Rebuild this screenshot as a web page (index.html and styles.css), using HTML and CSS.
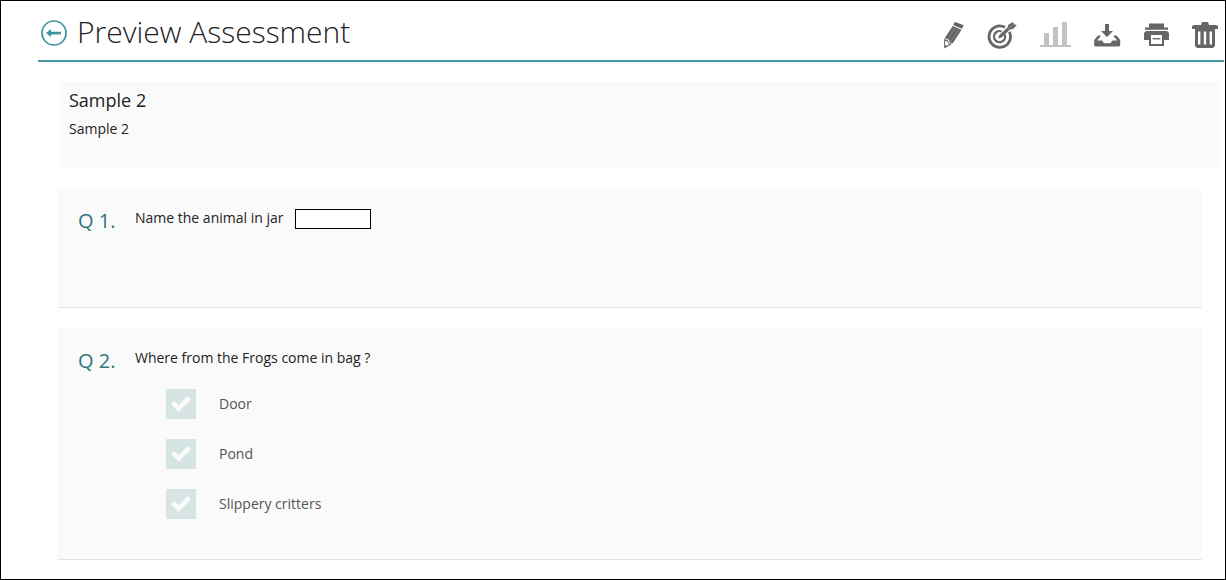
FILE: index.html
```html
<!DOCTYPE html>
<html lang="en">
<head>
    <meta charset="UTF-8">
    <meta name="viewport" content="width=device-width, initial-scale=1.0">
    <title>Preview Assessment</title>
    <link rel="stylesheet" href="styles.css">
</head>
<body>
    <header class="page-header">
        <a href="#" class="back" aria-label="Back">
            <svg width="26" height="26" viewBox="0 0 26 26">
                <circle cx="13" cy="13" r="12" fill="none" stroke="currentColor" stroke-width="1.7"/>
                <path d="M5 13l5-4v2.8h10v2.6H10V17z" fill="currentColor"/>
            </svg>
        </a>
        <h1>Preview Assessment</h1>
        <div class="toolbar">
            <button type="button" aria-label="Edit">
                <svg width="21" height="28" viewBox="0 0 21 28">
                    <path d="M12.3 1L20.7 4.2L19 7.8L10.3 4.2L11.3 1.4z"/>
                    <path d="M9.7 5L18.6 8.8L9.6 22.4L6.8 21.4L5.8 18.8L1.6 17.2z"/>
                    <path d="M1.1 17.8L5 19.4L6.2 22L9 23L1.2 27.4z"/>
                    <path d="M2.2 20L4.4 20.6L5.4 22.6L6.6 23L3.8 24.8L2.2 24z" fill="#fff"/>
                    <path d="M12.4 6.6L4.6 18M15.8 8L7.8 20.4" stroke="#8a8a8a" stroke-width="0.8"/>
                </svg>
            </button>
            <button type="button" aria-label="Set target">
                <svg width="30" height="28" viewBox="0 0 30 28">
                    <path d="M18 6.3A10.7 10.7 0 1 0 22.3 10.8" fill="none" stroke="currentColor" stroke-width="2.8"/>
                    <path d="M14.6 10.4A5.6 5.6 0 1 0 17.7 13.4" fill="none" stroke="currentColor" stroke-width="2.2"/>
                    <path d="M11 17.6L12.4 14L20.4 6.6L21.6 3.4L26 1L27 3.2L29.8 4L26.4 7.8L23 8.4L14.6 16.4z"/>
                    <path d="M20.8 8.2L27.4 2.6" stroke="#aaa" stroke-width="0.6"/>
                </svg>
            </button>
            <button type="button" class="muted" aria-label="Results">
                <svg width="31" height="28" viewBox="0 0 31 28">
                    <path d="M0 24h31v2H0zM4 12h5v12H4zM13 6h5v18h-5zM22 1h5v23h-5z"/>
                </svg>
            </button>
            <button type="button" aria-label="Download">
                <svg width="27" height="28" viewBox="0 0 27 28">
                    <path d="M11 3h4v7h4l-6 6-6-6h4z"/>
                    <path d="M4 14.4h2.4v1.4L3 19.4h5l2 2.8h6.4l2-2.8h5l-3.6-3.6v-1.4H22.6L26.2 19v5.6L25 25.6H1.4L.2 24.6V19z"/>
                </svg>
            </button>
            <button type="button" aria-label="Print">
                <svg width="25" height="28" viewBox="0 0 25 28">
                    <path d="M5 2.4h15v4h4v2.4H1V6.400h4z"/>
                    <path d="M2 10h21l2 2v7h-5v6H5v-6H0v-7z"/>
                    <path d="M7 14h11v9H7z" fill="#fff"/>
                    <path d="M8.600 17h7.800v1.400H8.600z"/>
                </svg>
            </button>
            <button type="button" aria-label="Delete">
                <svg width="26" height="28" viewBox="0 0 26 28">
                    <path d="M0 8V5l2-1h7l1-3h6l1 3h7l2 1v3h-3v17l-2 2H5l-2-2V8z"/>
                    <path d="M6 10.400h2.400v13H6zM11.800 10.400h2.400v13h-2.400zM17.600 10.400H20v13h-2.400z" fill="#fff"/>
                </svg>
            </button>
        </div>
    </header>

    <main>
        <section class="summary">
            <h2>Sample 2</h2>
            <p>Sample 2</p>
        </section>

        <section class="question">
            <h3>Q 1.</h3>
            <div class="question-body">
                <label for="answer">Name the animal in jar</label>
                <input type="text" id="answer" class="blank">
            </div>
        </section>

        <section class="question">
            <h3>Q 2.</h3>
            <div class="question-body">
                <p>Where from the Frogs come in bag ?</p>
                <ul class="options">
                    <li>
                        <input type="checkbox" id="door">
                        <label for="door">Door</label>
                    </li>
                    <li>
                        <input type="checkbox" id="pond">
                        <label for="pond">Pond</label>
                    </li>
                    <li>
                        <input type="checkbox" id="critters">
                        <label for="critters">Slippery critters</label>
                    </li>
                </ul>
            </div>
        </section>
    </main>
</body>
</html>
```
FILE: styles.css
```css
* {
    margin: 0;
    padding: 0;
    box-sizing: border-box;
}

body {
    font-family: "Open Sans", sans-serif;
    font-size: 14px;
    line-height: 20px;
    color: #222;
    background-color: #fff;
    border: 1px solid #000;
    min-height: 100vh;
}

/* Header */
.page-header {
    display: flex;
    align-items: center;
    height: 61px;
    margin-left: 37px;
    margin-right: 1px;
    padding: 4px 6px 0 3px;
    border-bottom: 2px solid #4596a0;
}

.back {
    display: flex;
    color: #3f939d;
}

.page-header h1 {
    margin-left: 10px;
    padding-bottom: 2px;
    font-size: 30px;
    font-weight: 300;
    line-height: 40px;
}

.toolbar {
    display: flex;
    gap: 23px;
    margin-left: auto;
    padding-top: 4px;
}

.toolbar button {
    display: flex;
    border: none;
    background: none;
    color: #666;
    cursor: pointer;
}

.toolbar .muted {
    color: #c3c3c3;
}

.toolbar svg {
    fill: currentColor;
}

/* Assessment title */
.summary {
    min-height: 86px;
    margin: 20px 5px 20px 59px;
    padding: 6px 9px;
    background-color: #fafafa;
}

.summary h2 {
    font-size: 18px;
    font-weight: 400;
    line-height: 24px;
}

.summary p {
    margin-top: 7px;
}

/* Questions */
.question {
    display: flex;
    min-height: 120px;
    margin: 0 23px 20px 57px;
    padding: 20px 20px 40px;
    background-color: #fafafa;
    border-bottom: 1px solid #e2e2e2;
}

.question:last-child {
    margin-bottom: 0;
}

.question h3 {
    width: 57px;
    font-size: 20px;
    font-weight: 400;
    line-height: 26px;
    color: #2f757b;
}

.blank {
    width: 76px;
    height: 20px;
    margin-left: 8px;
    padding: 0 4px;
    border: 1px solid #000;
    background-color: #fff;
    font: inherit;
    vertical-align: middle;
}

.options {
    display: flex;
    flex-direction: column;
    gap: 20px;
    margin: 21px 0 0 31px;
    list-style: none;
}

.options li {
    display: flex;
    align-items: center;
    color: #555;
}

.options input {
    display: grid;
    place-items: center;
    width: 30px;
    height: 30px;
    margin-right: 23px;
    appearance: none;
    background-color: #d6e4e4;
    cursor: pointer;
}

.options input::before {
    content: "";
    width: 20px;
    height: 16px;
    background-color: #fafafa;
    clip-path: polygon(0 50%, 15% 32%, 38% 58%, 83% 0, 100% 20%, 38% 100%);
}

.options input:checked {
    background-color: #4596a0;
}
```
